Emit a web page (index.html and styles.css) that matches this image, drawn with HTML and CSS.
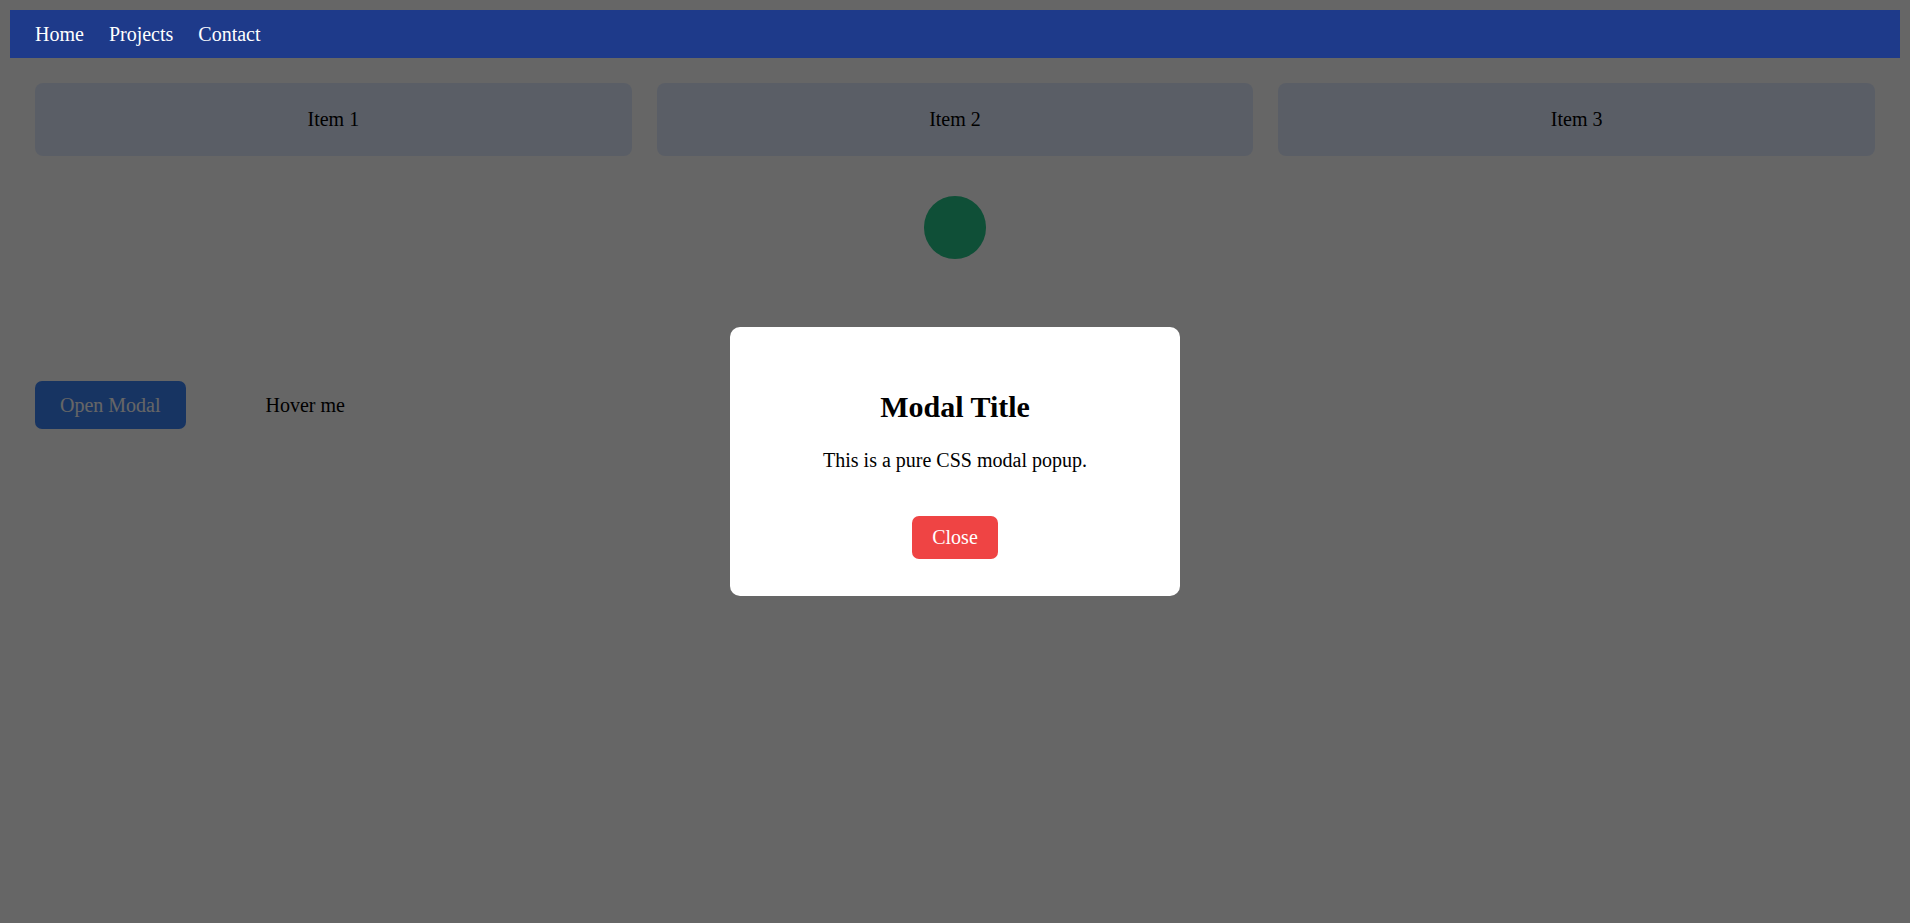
FILE: index.html
```html
<!DOCTYPE html>
<html lang="en">
<head>
<meta charset="utf-8">
<title>Pure CSS Demo</title>
<link rel="stylesheet" href="styles.css">
</head>
<body>
  <nav class="navbar">
    <a href="#" class="nav-link">Home</a>
    <a href="#" class="nav-link">Projects</a>
    <a href="#" class="nav-link">Contact</a>
  </nav>

  <section class="grid">
    <div class="card">Item 1</div>
    <div class="card">Item 2</div>
    <div class="card">Item 3</div>
  </section>

  <div class="circle"></div>

  <section class="actions-row">
    <button class="btn-open">Open Modal</button>
    <span class="tooltip">Hover me</span>
  </section>

  <div class="overlay">
    <div class="modal">
      <h2 class="modal-title">Modal Title</h2>
      <p class="modal-text">This is a pure CSS modal popup.</p>
      <div class="modal-actions">
        <button class="btn-close">Close</button>
      </div>
    </div>
  </div>
</body>
</html>
```

FILE: styles.css
```css
html, body {
  background: #ffffff;
}

body {
  margin: 10px;
  font-family: "Liberation Serif", "Times New Roman", serif;
  font-size: 20px;
  line-height: 23px;
  color: #000;
}

.navbar {
  position: relative;
  z-index: 1001;
  display: flex;
  gap: 25px;
  background: #1e3a8a;
  padding: 12.5px 25px;
}

.nav-link {
  color: #ffffff;
  text-decoration: none;
}

.grid {
  display: grid;
  grid-template-columns: repeat(3, 1fr);
  gap: 25px;
  padding: 25px;
}

.card {
  background: #e2ecff;
  border-radius: 8px;
  padding: 25px;
  text-align: center;
}

.circle {
  width: 62.5px;
  height: 62.5px;
  border-radius: 50%;
  background: #26c589;
  margin: 15px auto 0;
}

.actions-row {
  display: flex;
  align-items: center;
  gap: 80px;
  padding: 0 25px;
  margin-top: 122.5px;
}

.btn-open {
  font-family: "Liberation Serif", "Times New Roman", serif;
  font-size: 20px;
  line-height: 23px;
  background: #3b82f6;
  color: #ffffff;
  border: none;
  border-radius: 7px;
  padding: 12.5px 25px;
}

.tooltip {
  color: #000;
}

.overlay {
  position: fixed;
  inset: 0;
  z-index: 1000;
  background: rgba(0, 0, 0, 0.6);
  display: flex;
  align-items: center;
  justify-content: center;
}

.modal {
  width: 450px;
  box-sizing: border-box;
  background: #ffffff;
  border-radius: 10px;
  padding: 37.5px;
  text-align: center;
}

.modal-title {
  font-size: 30px;
  line-height: 34px;
  font-weight: bold;
  margin: 25px 0;
}

.modal-text {
  margin: 20px 0 0;
}

.modal-actions {
  display: flex;
  justify-content: center;
  padding-top: 44px;
}

.btn-close {
  font-family: "Liberation Serif", "Times New Roman", serif;
  font-size: 20px;
  line-height: 23px;
  background: #ef4444;
  color: #ffffff;
  border: none;
  border-radius: 7px;
  padding: 10px 20px;
}
```
